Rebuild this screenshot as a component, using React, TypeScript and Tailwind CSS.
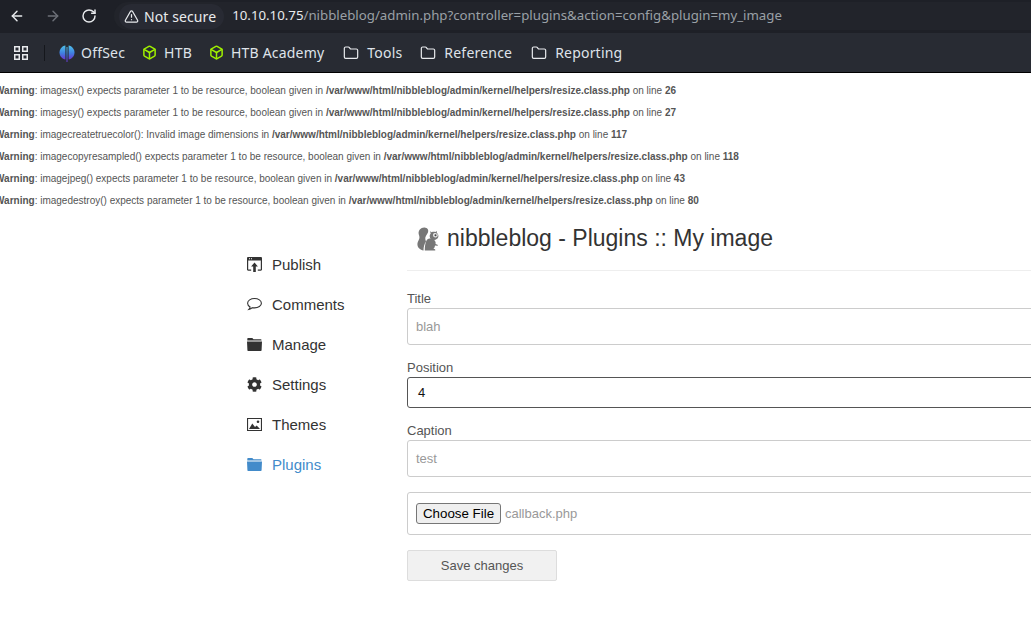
import { ArrowLeft, ArrowRight, Folder, RotateCw, TriangleAlert, Box } from 'lucide-react'
import { FaCog } from 'react-icons/fa'
import type { ReactNode } from 'react'

const warnings = [
  { msg: 'imagesx() expects parameter 1 to be resource, boolean given in', line: 26 },
  { msg: 'imagesy() expects parameter 1 to be resource, boolean given in', line: 27 },
  { msg: 'imagecreatetruecolor(): Invalid image dimensions in', line: 117 },
  { msg: 'imagecopyresampled() expects parameter 1 to be resource, boolean given in', line: 118 },
  { msg: 'imagejpeg() expects parameter 1 to be resource, boolean given in', line: 43 },
  { msg: 'imagedestroy() expects parameter 1 to be resource, boolean given in', line: 80 },
]

function AppsIcon() {
  return (
    <svg viewBox="0 0 14 14" className="h-[14px] w-[14px] text-[#e8eaed]" fill="none" stroke="currentColor" strokeWidth="1.5">
      <rect x="0.75" y="0.75" width="4.5" height="4.5" />
      <rect x="8.75" y="0.75" width="4.5" height="4.5" />
      <rect x="0.75" y="8.75" width="4.5" height="4.5" />
      <rect x="8.75" y="8.75" width="4.5" height="4.5" />
    </svg>
  )
}

function OffSecIcon() {
  return (
    <svg viewBox="0 0 16 18" className="h-[18px] w-4">
      <defs>
        <linearGradient id="offsec" x1="0" y1="0" x2="0" y2="1">
          <stop offset="0" stopColor="#4fc3ea" />
          <stop offset="0.55" stopColor="#3f7fe0" />
          <stop offset="1" stopColor="#6a35d0" />
        </linearGradient>
      </defs>
      <path d="M6.400 1.400C3 2 .5 4.800.5 8.500s2.500 6.300 5.900 7z" fill="url(#offsec)" />
      <path d="M9.600 1.400c3.400.6 5.900 3.400 5.900 7.100s-2.500 6.300-5.900 7z" fill="url(#offsec)" />
      <path d="M7.500 3h1v15h-1z" fill="url(#offsec)" />
    </svg>
  )
}

function Bookmark({ icon, label, gap, className }: { icon: ReactNode; label: string; gap: string; className: string }) {
  return (
    <div className={`flex items-center ${gap} ${className}`}>
      {icon}
      <span className="text-[14px] tracking-[0.2px] text-[#dfe3ea]">{label}</span>
    </div>
  )
}

function PublishIcon() {
  return (
    <svg viewBox="0 0 15 15" className="h-[15px] w-[15px]" fill="#333">
      <path d="M0 1.200C0 .5.5 0 1.200 0h12.600c.7 0 1.200.5 1.200 1.200v11.300c0 .7-.5 1.200-1.200 1.200h-3v-1.100h3V3.400H1.200v9.200h3v1.100h-3C.5 13.700 0 13.200 0 12.500z" />
      <path d="M2 1.200h1v1H2zM4 1.200h1v1H4z" fill="#fff" />
      <path d="M7.500 5.600l3.400 3.800H8.800V15H6.200V9.400H4.100z" />
    </svg>
  )
}

function CommentIcon() {
  return (
    <svg viewBox="0 0 15 15" className="h-[15px] w-[15px]" fill="none" stroke="#333" strokeWidth="1.1">
      <path d="M7.500 1.500c3.800 0 6.900 2 6.900 4.700s-3.100 4.700-6.900 4.700c-.8 0-1.500-.1-2.200-.2-.9.900-2.100 1.500-3.400 1.700.7-.7 1.100-1.500 1.200-2.400C1.600 9.100.6 7.800.6 6.200c0-2.700 3.100-4.700 6.900-4.700z" />
    </svg>
  )
}

function FolderIcon({ color }: { color: string }) {
  return (
    <svg viewBox="0 0 15 13" className="h-[13px] w-[15px]" fill={color}>
      <path d="M1 0h4.300l1.200 1.200h7.300c.4 0 .7.300.7.700v.6H.3V.7C.3.300.6 0 1 0z" />
      <path d="M0 3.400h15l-.4 8.600c0 .6-.4 1-1 1H1.400c-.6 0-1-.4-1-1z" />
    </svg>
  )
}

function PictureIcon() {
  return (
    <svg viewBox="0 0 15 13" className="h-[13px] w-[15px]">
      <path d="M0 0h15v13H0zM1.100 1.100v10.800h12.800V1.100z" fill="#333" fillRule="evenodd" />
      <path d="M2 11l3.300-5.400 2.700 3.300 1.700-1.500 3.300 3.600z" fill="#333" />
      <circle cx="11" cy="3.700" r="1.300" fill="#333" />
    </svg>
  )
}

function SquirrelIcon() {
  return (
    <svg viewBox="0 0 24 24" className="h-6 w-6" fill="#777">
      {/* tail */}
      <path d="M7 23.500C1.500 22 .2 17.500 2.500 13.500 4 11 3.500 9.500 2.800 7.500 1.800 3.500 5 .3 8.500.5c2.700.2 4.300 2 3.600 4.500-.5 1.800-2 3-2.600 5-.5 1.700 0 3.200.5 4.500-1.800 2.500-2.500 5.500-2.500 9z" />
      {/* body */}
      <path d="M10.800 13c1.500-1.500 4-1.800 6-1 2.300 1 3.200 3 2.800 5l1.900.7c.6.4.4 1.100-.3 1.100l-2.200-.2c-.2 1.300-.7 2.600-1.600 3.500h1c.8.100 1.100.8.800 1.400H8.800c0-4 .3-7.500 2-10.500z" />
      {/* head */}
      <path d="M14 4.200l1.700 1c1-.5 2.600-.6 3.700-.1l1.400-1 .1 2c1.300 1 1.800 2.600 1.400 4-.5 1.800-2.400 3-4.500 2.900-2.300 0-4-1.500-4.100-3.500-.1-1.300.4-2.300 1-3.100z" />
      <path d="M17.800 6.300c1.400-.5 3.200.1 3.900 1.300.5 1-.2 2.200-1.300 2.600-1 .4-2.100.2-2.800-.4-.9-.9-.9-2.900.2-3.500z" fill="#e4e4e4" />
      <circle cx="19.500" cy="8.200" r="1" fill="#444" />
      <path d="M9.700 10.500c.4-1.200 1.200-2 2.300-2.600-.2 1.200-.6 2.300-1.200 3.400z" fill="#fff" />
    </svg>
  )
}

function NavItem({ icon, label, active }: { icon: ReactNode; label: string; active?: boolean }) {
  return (
    <div className={`flex h-10 items-center text-[15px] ${active ? 'text-[#428bca]' : 'text-[#333]'}`}>
      <span className="flex w-[25px] -translate-y-px items-center">{icon}</span>
      {label}
    </div>
  )
}

const folderIcon = <Folder className="h-4 w-4 text-[#e8eaed]" strokeWidth={1.8} />
const boxIcon = <Box className="h-[15px] w-[15px] text-[#9fef00]" strokeWidth={2.4} />

export default function App() {
  return (
    <div className="flex h-[619px] w-[1031px] flex-col overflow-hidden bg-white font-['Liberation_Sans',Arial,sans-serif]">
      {/* browser chrome */}
      <div className="font-['Noto_Sans',sans-serif]">
        <div className="flex h-[33px] items-center bg-[#1e2027] pb-px pl-[9px]">
          <ArrowLeft className="h-4 w-4 text-[#e8eaed]" strokeWidth={2.2} />
          <ArrowRight className="ml-5 h-4 w-4 text-[#6d7078]" strokeWidth={2.2} />
          <RotateCw className="ml-5 h-4 w-4 text-[#e8eaed]" strokeWidth={2.2} />
          <div className="ml-[17px] flex h-7 flex-1 items-center whitespace-nowrap rounded-l-full bg-[#22242b] pl-[5px]">
            <div className="flex h-[25px] items-center gap-[5px] rounded-full bg-[#282a33] pl-[5px] pr-[8px] text-[14px] tracking-[0.1px] text-[#e8eaed]">
              <TriangleAlert className="h-[15px] w-[15px]" strokeWidth={2} />
              Not secure
            </div>
            <div className="ml-[8px] text-[13.25px] text-[#9aa0a6]">
              <span className="text-[#e8eaed]">10.10.10.75</span>
              /nibbleblog/admin.php?controller=plugins&amp;action=config&amp;plugin=my_image
            </div>
          </div>
        </div>
        <div className="flex h-[40px] items-center border-b border-black bg-[#282b33] pl-[14px]">
          <AppsIcon />
          <div className="ml-[16px] h-[16px] w-px bg-[#15171c]" />
          <Bookmark icon={<OffSecIcon />} label="OffSec" gap="gap-[6px]" className="ml-[14px]" />
          <Bookmark icon={boxIcon} label="HTB" gap="gap-[7px]" className="ml-[17px]" />
          <Bookmark icon={boxIcon} label="HTB Academy" gap="gap-[7px]" className="ml-[17px]" />
          <Bookmark icon={folderIcon} label="Tools" gap="gap-[8px]" className="ml-[19px]" />
          <Bookmark icon={folderIcon} label="Reference" gap="gap-[8px]" className="ml-[18px]" />
          <Bookmark icon={folderIcon} label="Reporting" gap="gap-[8px]" className="ml-[19px]" />
        </div>
      </div>

      {/* php warnings */}
      <div className="-ml-[5px] pt-[6px] text-[10px] text-[#555]">
        {warnings.map((w) => (
          <div key={w.line} className="flex h-[22px] items-center whitespace-pre">
            <b>Warning</b>: {w.msg} <b>/var/www/html/nibbleblog/admin/kernel/helpers/resize.class.php</b> on line <b>{w.line}</b>
          </div>
        ))}
      </div>

      <div className="flex pl-[247px]">
        <nav className="w-[160px] shrink-0 pt-[34px]">
          <NavItem icon={<PublishIcon />} label="Publish" />
          <NavItem icon={<CommentIcon />} label="Comments" />
          <NavItem icon={<FolderIcon color="#333" />} label="Manage" />
          <NavItem icon={<FaCog className="h-[15px] w-[15px] text-[#333]" />} label="Settings" />
          <NavItem icon={<PictureIcon />} label="Themes" />
          <NavItem icon={<FolderIcon color="#428bca" />} label="Plugins" active />
        </nav>

        <main className="w-[700px] shrink-0 text-[13px] text-[#555]">
          <div className="flex h-[60px] items-start gap-[7px] border-b border-[#eee] pl-[9px] pt-[16px]">
            <SquirrelIcon />
            <h1 className="-mt-[5px] text-[23px] leading-[32px] text-[#333]">nibbleblog - Plugins :: My image</h1>
          </div>
          <label className="mb-[2px] mt-[20px] block leading-[15px]">Title</label>
          <div className="flex h-[37px] items-center rounded-[3px] border border-[#ccc] pl-[8px] text-[#999]">blah</div>
          <label className="mt-[14px] block leading-[17px]">Position</label>
          <div className="mt-[1px] flex h-[31px] items-center rounded-[3px] border border-[#555] pl-[10px] text-[#111]">4</div>
          <label className="mt-[14px] block leading-[17px]">Caption</label>
          <div className="mt-[1px] flex h-[37px] items-center rounded-[3px] border border-[#ccc] pl-[8px] text-[#999]">test</div>
          <div className="mt-[15px] flex h-[43px] items-center gap-[4px] rounded-[3px] border border-[#ccc] pl-[8px] text-[#999]">
            <button className="h-[21px] w-[85px] rounded-[3px] border border-[#767676] bg-[#efefef] text-[13.33px] text-black">Choose File</button>
            callback.php
          </div>
          <button className="mt-[15px] h-[31px] w-[150px] rounded-[2px] border border-[#ddd] bg-[#f1f1f1] text-[13px] text-[#555]">Save changes</button>
        </main>
      </div>
    </div>
  )
}
